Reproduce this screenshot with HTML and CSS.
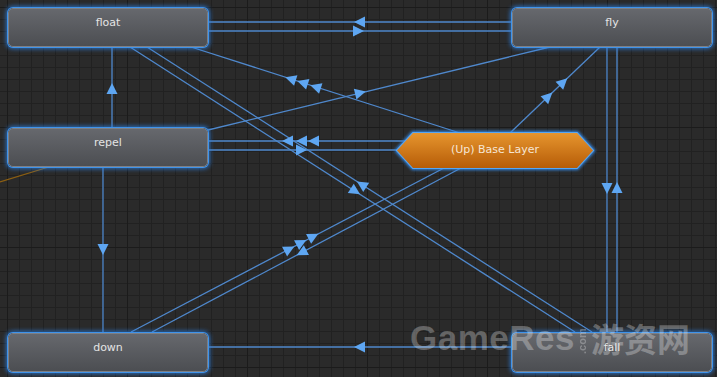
FILE: index.html
```html
<!DOCTYPE html>
<html lang="en">

<head>
    <meta charset="UTF-8">
    <meta name="viewport" content="width=device-width, initial-scale=1.0">
    <title>Animator - Base Layer</title>

    <link rel="stylesheet" href="styles.css">
</head>

<body>
    <div class="graph">
        <!-- transitions -->
        <svg class="edges" width="717" height="377" viewBox="0 0 717 377">
            <defs>
                <path id="arrow" d="M6,0 L-5,-5.5 L-5,5.5 Z" />
            </defs>

            <line class="entry" x1="0" y1="182" x2="52" y2="166" />

            <g class="lines">
                <!-- float <-> fly -->
                <line x1="208" y1="22" x2="512" y2="22" />
                <line x1="208" y1="31" x2="512" y2="31" />
                <!-- float / repel / down -->
                <line x1="112" y1="47" x2="112" y2="128" />
                <line x1="103" y1="167" x2="103" y2="332" />
                <!-- down <- fall -->
                <line x1="208" y1="347" x2="512" y2="347" />
                <!-- fly <-> fall -->
                <line x1="607" y1="47" x2="607" y2="332" />
                <line x1="617" y1="47" x2="617" y2="332" />
                <!-- base layer -> float -->
                <line x1="460" y1="133" x2="191" y2="47" />
                <!-- repel -> fly -->
                <line x1="208" y1="130" x2="550" y2="47" />
                <!-- base layer -> fly -->
                <line x1="510" y1="133" x2="600" y2="47" />
                <!-- repel <-> base layer -->
                <line x1="208" y1="141" x2="406" y2="141" />
                <line x1="208" y1="150" x2="398" y2="150" />
                <!-- float <-> fall -->
                <line x1="130" y1="47" x2="575" y2="332" />
                <line x1="147" y1="47" x2="592" y2="332" />
                <!-- down <-> base layer -->
                <line x1="131" y1="332" x2="444" y2="168" />
                <line x1="152" y1="332" x2="461" y2="168" />
            </g>

            <g class="arrows">
                <use href="#arrow" transform="translate(360 22) rotate(180)" />
                <use href="#arrow" transform="translate(358 31)" />
                <use href="#arrow" transform="translate(112 89) rotate(-90)" />
                <use href="#arrow" transform="translate(103 249) rotate(90)" />
                <use href="#arrow" transform="translate(360 347) rotate(180)" />
                <use href="#arrow" transform="translate(607 188) rotate(90)" />
                <use href="#arrow" transform="translate(617 188) rotate(-90)" />

                <use href="#arrow" transform="translate(291 79) rotate(-162.3)" />
                <use href="#arrow" transform="translate(303 82.8) rotate(-162.3)" />
                <use href="#arrow" transform="translate(316 87) rotate(-162.3)" />

                <use href="#arrow" transform="translate(360 93) rotate(-13.6)" />

                <use href="#arrow" transform="translate(548 96.7) rotate(-43.7)" />
                <use href="#arrow" transform="translate(563 82.3) rotate(-43.7)" />

                <use href="#arrow" transform="translate(288 141) rotate(180)" />
                <use href="#arrow" transform="translate(302 141) rotate(180)" />
                <use href="#arrow" transform="translate(314 141) rotate(180)" />
                <use href="#arrow" transform="translate(301 150)" />

                <use href="#arrow" transform="translate(355 191) rotate(32.6)" />
                <use href="#arrow" transform="translate(362 184.7) rotate(212.6)" />

                <use href="#arrow" transform="translate(289 249.2) rotate(-27.6)" />
                <use href="#arrow" transform="translate(301 242.9) rotate(-27.6)" />
                <use href="#arrow" transform="translate(313 236.6) rotate(-27.6)" />
                <use href="#arrow" transform="translate(302 252.4) rotate(152)" />
            </g>
        </svg>

        <!-- states -->
        <div class="node node-float">float</div>
        <div class="node node-fly">fly</div>
        <div class="node node-repel">repel</div>
        <div class="node node-down">down</div>
        <div class="node node-fall">fall</div>

        <div class="layer-node">
            <svg class="layer-shape" width="210" height="49" viewBox="-7 -7 210 49">
                <defs>
                    <linearGradient id="orange" x1="0" y1="0" x2="0" y2="1">
                        <stop offset="0" stop-color="#e6952e" />
                        <stop offset="1" stop-color="#b65c07" />
                    </linearGradient>
                    <filter id="glow" x="-10%" y="-40%" width="120%" height="180%">
                        <feGaussianBlur stdDeviation="1.6" />
                    </filter>
                </defs>
                <polygon class="glow" points="0,17.5 16,0 180,0 196,17.5 180,35 16,35" filter="url(#glow)" />
                <polygon class="glow-line" points="0,17.5 16,0 180,0 196,17.5 180,35 16,35" />
                <polygon points="0,17.5 16,0 180,0 196,17.5 180,35 16,35" fill="url(#orange)" />
            </svg>
            <span class="layer-label">(Up) Base Layer</span>
        </div>

        <div class="watermark">
            <span class="wm-latin">GameRes</span>
            <span class="wm-com">.com</span>
            <span class="wm-cjk">游资网</span>
        </div>
    </div>
</body>

</html>
```

FILE: styles.css
```css
* {
    box-sizing: border-box;
    margin: 0;
    padding: 0;
}

body {
    background: #2a2a2a;
    font-family: "DejaVu Sans", Verdana, sans-serif;
    overflow: hidden;
}

.graph {
    position: relative;
    width: 717px;
    height: 377px;
    background-color: #2a2a2a;
    background-image:
        linear-gradient(#1b1b1b 1px, transparent 1px),
        linear-gradient(90deg, #1b1b1b 1px, transparent 1px),
        linear-gradient(#212121 1px, transparent 1px),
        linear-gradient(90deg, #212121 1px, transparent 1px);
    background-size: 120px 120px, 120px 120px, 12px 12px, 12px 12px;
    background-position: 7px 7px, 7px 7px, 7px 7px, 7px 7px;
    overflow: hidden;
}

.edges {
    position: absolute;
    left: 0;
    top: 0;
}

.lines line {
    stroke: #4f88cc;
    stroke-width: 1.3;
}

.entry {
    stroke: #8c5f12;
    stroke-width: 1.3;
}

.arrows use {
    fill: #5ea6f2;
}

/* state boxes */
.node {
    position: absolute;
    width: 200px;
    height: 39px;
    padding-top: 7px;
    border: 1px solid #7c7f85;
    border-radius: 5px;
    background: linear-gradient(#66686d, #4c4e52);
    box-shadow: 0 0 0 1px #3f93ea, 0 0 4px 2px rgba(44, 130, 230, 0.75);
    color: #e4e4e4;
    font-size: 11px;
    line-height: 14px;
    text-align: center;
}

.node-float {
    left: 8px;
    top: 8px;
}

.node-fly {
    left: 512px;
    top: 8px;
}

.node-repel {
    left: 8px;
    top: 128px;
}

.node-down {
    left: 8px;
    top: 333px;
}

.node-fall {
    left: 512px;
    top: 333px;
}

/* sub state machine */
.layer-node {
    position: absolute;
    left: 390px;
    top: 126px;
    width: 210px;
    height: 49px;
}

.layer-shape {
    position: absolute;
    left: 0;
    top: 0;
}

.layer-shape .glow {
    fill: none;
    stroke: #2f86e6;
    stroke-width: 4;
}

.layer-shape .glow-line {
    fill: none;
    stroke: #56a6f4;
    stroke-width: 2;
}

.layer-label {
    position: absolute;
    left: 0;
    right: 0;
    top: 17px;
    color: #f6e6d4;
    font-size: 11px;
    line-height: 14px;
    text-align: center;
}

/* site watermark */
.watermark {
    position: absolute;
    left: 410px;
    top: 318px;
    display: flex;
    align-items: flex-end;
    color: rgba(255, 255, 255, 0.28);
    white-space: nowrap;
}

.wm-latin {
    font-family: "Liberation Sans", Arial, sans-serif;
    font-weight: bold;
    font-size: 35px;
    line-height: 40px;
    letter-spacing: 0.5px;
}

.wm-com {
    display: inline-block;
    width: 12px;
    height: 30px;
    margin: 0 3px 4px 1px;
    font-family: "Liberation Sans", Arial, sans-serif;
    font-weight: bold;
    font-size: 11px;
    line-height: 12px;
    writing-mode: vertical-rl;
    transform: rotate(180deg);
}

.wm-cjk {
    font-family: "Noto Sans CJK SC", sans-serif;
    font-weight: bold;
    font-size: 33px;
    line-height: 40px;
}
```
